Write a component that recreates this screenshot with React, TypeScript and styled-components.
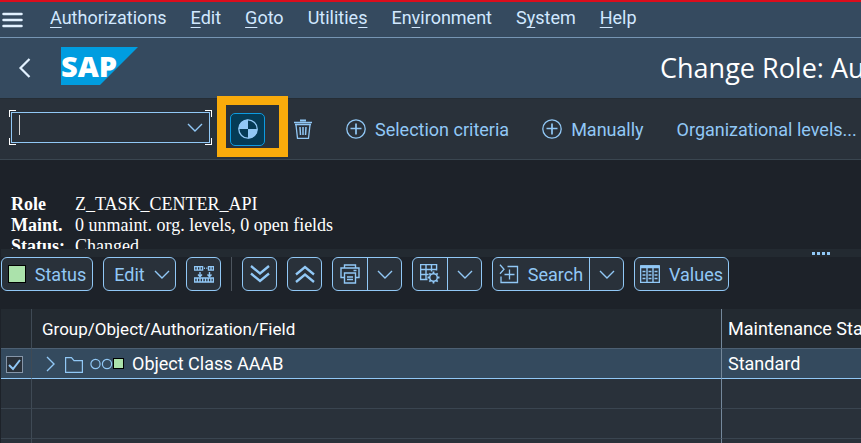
import React from "react";
import styled, { createGlobalStyle, css } from "styled-components";

const link = "#91c8f6";
const sans = `Roboto, "Liberation Sans", sans-serif`;

const GlobalStyle = createGlobalStyle`
  *, *::before, *::after { box-sizing: border-box; }
  html, body { margin: 0; background: #1d2229; }
  body { font-family: ${sans}; font-size: 18px; color: #fff; }
  button, input { font: inherit; color: inherit; }
`;

const Page = styled.div`
  height: 100vh;
  overflow: hidden;
  background: #1d2229;
`;

const MenuBar = styled.nav`
  display: flex;
  align-items: center;
  height: 38px;
  padding: 0 2px;
  border-top: 2px solid #dc0d1c;
  border-bottom: 1px solid #7695b3;
  background: #354a5f;
  color: #d1e8ff;
`;

const PlainButton = styled.button`
  display: flex;
  align-items: center;
  flex: none;
  gap: 9px;
  padding: 0;
  border: 0;
  background: none;
  white-space: nowrap;
`;

const MenuList = styled.ul`
  display: flex;
  gap: 24px;
  margin: 0 0 4px 27px;
  padding: 0;
  list-style: none;
`;

const Key = styled.u`
  text-decoration: underline;
  text-decoration-thickness: 1px;
  text-underline-offset: 3px;
  text-decoration-skip-ink: none;
`;

const Header = styled.header`
  display: flex;
  align-items: center;
  height: 60px;
  padding-left: 17px;
  background: #354a5f;
  overflow: hidden;
`;

const Logo = styled.svg`
  flex: none;
  margin: 0 0 4px 28px;
`;

const Title = styled.h1`
  flex: none;
  margin: 0 0 0 522px;
  font-family: "Open Sans", sans-serif;
  font-size: 27px;
  line-height: 32px;
  font-weight: 400;
  white-space: nowrap;
`;

const ActionBar = styled.div`
  display: flex;
  align-items: center;
  height: 62px;
  padding-left: 9px;
  border-top: 1px solid #252d35;
  border-bottom: 1px solid #3a4650;
  background: #29313a;
  color: ${link};
`;

const corner = (x: string, y: string) => css`
  linear-gradient(#fff, #fff) ${x} ${y} / 7px 1px no-repeat,
  linear-gradient(#fff, #fff) ${x} ${y} / 1px 7px no-repeat
`;

const CommandFrame = styled.div`
  flex: none;
  width: 203px;
  padding: 2px;
  margin-bottom: 4px;
  background: ${corner("left", "top")}, ${corner("right", "top")},
    ${corner("left", "bottom")}, ${corner("right", "bottom")};
`;

const CommandBox = styled.div`
  display: flex;
  align-items: center;
  height: 31px;
  padding: 0 6px 0 7px;
  border: 1px solid ${link};
`;

const Caret = styled.span`
  width: 1px;
  height: 20px;
  margin-bottom: 5px;
  background: #d5d5d5;
`;

const CommandInput = styled.input`
  flex: 1;
  min-width: 0;
  height: 27px;
  padding: 0;
  border: 0;
  outline: 0;
  background: none;
`;

const Highlight = styled.div`
  position: relative;
  flex: none;
  margin: 0 28px 0 18px;

  &::after {
    content: "";
    position: absolute;
    inset: -17px -23px -11px -13px;
    border: 9px solid #f9ab0b;
    pointer-events: none;
  }
`;

const ActiveButton = styled(PlainButton)`
  justify-content: center;
  width: 35px;
  height: 33px;
  border: 1px solid #0d9be0;
  border-radius: 5px;
  background: #053b56;
`;

const Actions = styled.div`
  display: flex;
  gap: 33px;
`;

const RoleInfo = styled.dl`
  display: grid;
  grid-template-columns: 64px 1fr;
  align-content: start;
  height: 89px;
  margin: 0;
  padding: 34px 11px 0;
  overflow: hidden;
  font-family: "Liberation Serif", serif;
  font-size: 18px;
  line-height: 21px;
`;

const Term = styled.dt`
  font-weight: 700;
`;

const Detail = styled.dd`
  margin: 0;
`;

const Splitter = styled.div`
  display: flex;
  justify-content: flex-end;
  align-items: center;
  gap: 2px;
  height: 8px;
  margin-left: 1px;
  padding-right: 31px;
  background: #232a31;
`;

const Dot = styled.i`
  width: 3px;
  height: 3px;
  background: ${link};
`;

const GridBar = styled.div`
  display: flex;
  gap: 10px;
  padding: 0 1px;
  color: ${link};
`;

const Group = styled.div`
  display: flex;
  flex: none;
  height: 34px;
  border: 1px solid ${link};
  border-radius: 6px;
  background: #29313a;
  overflow: hidden;
`;

const GroupButton = styled(PlainButton)<{ $w?: number; $menu?: boolean }>`
  justify-content: center;
  width: ${(p) => (p.$w ? `${p.$w}px` : "auto")};
  padding-left: ${(p) => (p.$menu ? "5px" : "0")};

  & + & {
    border-left: 1px solid ${link};
  }
`;

const Separator = styled.span`
  width: 1px;
  height: 34px;
  background: #4d555e;
`;

const Led = styled.i<{ $size: number }>`
  flex: none;
  width: ${(p) => p.$size}px;
  height: ${(p) => p.$size}px;
  border: 1px solid #000;
  background: #abe2ab;
`;

const Tree = styled.table`
  width: calc(100% - 1px);
  margin: 18px 0 0 1px;
  border-collapse: separate;
  border-spacing: 0;
  table-layout: fixed;
  text-align: left;
`;

const CheckCol = styled.col`
  width: 31px;
`;

const NameCol = styled.col`
  width: 690px;
`;

const Row = styled.tr<{ $selected?: boolean }>`
  height: 30px;
  background: ${(p) => (p.$selected ? "#344a5e" : "#29313a")};

  & > td {
    border-bottom: 1px solid ${(p) => (p.$selected ? link : "#3a4550")};
  }
`;

const HeadRow = styled.tr`
  height: 40px;
  background: #232a31;

  & > th {
    border-bottom: 1px solid #4d6073;
    font-weight: 400;
  }
`;

const cell = css`
  padding: 0;
  white-space: nowrap;
  overflow: hidden;

  &:first-child { border-right: 1px solid #3f4a55; }
  &:nth-child(2) { padding-left: 10px; border-right: 1px solid #74889b; }
  &:nth-child(3) { padding-left: 6px; }
`;

const HeadCell = styled.th<{ $compact?: boolean }>`
  ${cell}
  font-size: ${(p) => (p.$compact ? 17 : 18)}px;
`;

const Cell = styled.td`
  ${cell}
`;

const CheckBox = styled.input`
  display: block;
  appearance: none;
  width: 17px;
  height: 17px;
  margin: 1px 0 0 5px;
  border: 1px solid #8696a9;
  background: #29313a;

  &:checked {
    background: #29313a
      url("data:image/svg+xml,%3Csvg xmlns='http://www.w3.org/2000/svg' viewBox='0 0 15 15' fill='none' stroke='%2391c8f6' stroke-width='2'%3E%3Cpath d='M2 8l4 4 7-9'/%3E%3C/svg%3E")
      center / 15px 15px no-repeat;
  }
`;

const Node = styled.div`
  display: flex;
  align-items: center;
`;

const FolderIcon = styled.svg`
  margin: 2px 7px 0 7px;
`;

const Lamps = styled.span`
  display: flex;
  align-items: center;
  margin-right: 8px;
`;

const Chevron = ({ w = 16, h = 9 }: { w?: number; h?: number }) => (
  <svg width={w} height={h} viewBox="0 0 16 9" fill="none" stroke={link} strokeWidth="1.4" aria-hidden="true">
    <path d="M1 1l7 7 7-7" />
  </svg>
);

const PlusCircle = () => (
  <svg width="20" height="20" viewBox="0 0 20 20" fill="none" stroke={link} strokeWidth="1.3" aria-hidden="true">
    <circle cx="10" cy="10" r="9.2" />
    <path d="M4.500 9.500h11M10 4.500v11" strokeWidth="1.7" />
  </svg>
);

const menus = [
  ["", "A", "uthorizations"],
  ["", "E", "dit"],
  ["", "G", "oto"],
  ["Utilitie", "s", ""],
  ["En", "v", "ironment"],
  ["S", "y", "stem"],
  ["", "H", "elp"],
];

export default function App() {
  return (
    <Page>
      <GlobalStyle />
      <MenuBar aria-label="Main menu">
        <PlainButton aria-label="Menu">
          <svg width="21" height="16" viewBox="0 0 21 16" stroke="#e2f1ff" strokeWidth="2.500" strokeLinecap="round">
            <path d="M1.500 2h18M1.500 8h18M1.500 14h18" />
          </svg>
        </PlainButton>
        <MenuList>
          {menus.map(([a, key, b]) => (
            <li key={a + key + b}>
              <PlainButton>
                <span>{a}<Key>{key}</Key>{b}</span>
              </PlainButton>
            </li>
          ))}
        </MenuList>
      </MenuBar>

      <Header>
        <PlainButton aria-label="Back">
          <svg width="16" height="20" viewBox="0 0 16 20" fill="none" stroke="#e2f1ff" strokeWidth="2.200">
            <path d="M12.500 1L3.500 10l9 9" />
          </svg>
        </PlainButton>
        <Logo width="77" height="38" viewBox="0 0 77 38" role="img" aria-label="SAP">
          <path d="M0 0h77L39 38H0z" fill="#009de0" />
          <text x="0" y="30" fill="#fff" fontFamily="Open Sans" fontWeight="800" fontSize="29">SAP</text>
        </Logo>
        <Title>Change Role: Authorizations</Title>
      </Header>

      <ActionBar>
        <CommandFrame>
          <CommandBox>
            <Caret />
            <CommandInput aria-label="Command" />
            <PlainButton aria-label="Open command list"><Chevron /></PlainButton>
          </CommandBox>
        </CommandFrame>
        <Highlight>
          <ActiveButton aria-label="Status">
            <svg width="20" height="20" viewBox="0 0 20 20" aria-hidden="true">
              <circle cx="10" cy="10" r="9.200" fill="none" stroke={link} strokeWidth="1.300" />
              <path d="M10 10V.5A9.500 9.500 0 0 0 .5 10zM10 10v9.500a9.500 9.500 0 0 0 9.500-9.500z" fill={link} />
            </svg>
          </ActiveButton>
        </Highlight>
        <Actions>
          <PlainButton aria-label="Delete">
            <svg width="20" height="22" viewBox="0 0 20 22" fill="none" stroke={link} strokeWidth="1.300" aria-hidden="true">
              <path d="M7 2.500h6" strokeWidth="2" />
              <path d="M1 4.500h18M2 6.500h16M3 7l1.500 13.300h11L17 7" />
              <path d="M7 9l.5 8M10 9v8M13 9l-.5 8" strokeWidth="1.500" />
            </svg>
          </PlainButton>
          <PlainButton><PlusCircle />Selection criteria</PlainButton>
          <PlainButton><PlusCircle />Manually</PlainButton>
          <PlainButton>Organizational levels...</PlainButton>
        </Actions>
      </ActionBar>

      <RoleInfo>
        <Term>Role</Term><Detail>Z_TASK_CENTER_API</Detail>
        <Term>Maint.</Term><Detail>0 unmaint. org. levels, 0 open fields</Detail>
        <Term>Status:</Term><Detail>Changed</Detail>
      </RoleInfo>

      <Splitter><Dot /><Dot /><Dot /><Dot /></Splitter>

      <GridBar role="toolbar">
        <Group><GroupButton $w={90}><Led $size={18} />Status</GroupButton></Group>
        <Group><GroupButton $w={71} $menu>Edit<Chevron /></GroupButton></Group>
        <Group>
          <GroupButton $w={33} aria-label="Compare entries">
            <svg width="20" height="18" viewBox="0 0 20 18" fill="none" stroke={link} strokeWidth="1.400" aria-hidden="true">
              <path d="M.6 1.600h8v3.500h-8zM3.300 1.600v3.500M6 1.600v3.500M14.500 1.600h5v3.500h-5zM17 1.600v3.500M10 3.300h1M12.300 3.300h1" />
              <path d="M.6 13h18.800v4H.6zM3.300 13v4M6 13v4M8.700 13v4M11.500 13v4M14.200 13v4M16.900 13v4" />
              <path d="M6 7v5M4 9.500l2 2.300 2-2.300M15.500 7v5M13.500 9.500l2 2.300 2-2.300" />
            </svg>
          </GroupButton>
        </Group>
        <Separator />
        <Group>
          <GroupButton $w={33} aria-label="Expand all">
            <svg width="20" height="18" viewBox="0 0 20 18" fill="none" stroke={link} strokeWidth="2.300" aria-hidden="true">
              <path d="M1 1l9 7.500L19 1M1 8.500l9 7.500 9-7.500" />
            </svg>
          </GroupButton>
        </Group>
        <Group>
          <GroupButton $w={33} aria-label="Collapse all">
            <svg width="20" height="18" viewBox="0 0 20 18" fill="none" stroke={link} strokeWidth="2.300" aria-hidden="true">
              <path d="M1 9.500L10 2l9 7.500M1 17l9-7.500 9 7.500" />
            </svg>
          </GroupButton>
        </Group>
        <Group>
          <GroupButton $w={34} aria-label="Print">
            <svg width="20" height="20" viewBox="0 0 20 20" fill="none" stroke={link} strokeWidth="1.400" aria-hidden="true">
              <path d="M4.500 4V1h11v3M4.500 13.500H1V4h18v9.500h-3.500M4.500 9h11v10h-11zM7 13h6M7 15.500h6M13.500 6.500h3" />
            </svg>
          </GroupButton>
          <GroupButton $w={34} aria-label="Print options"><Chevron /></GroupButton>
        </Group>
        <Group>
          <GroupButton $w={34} aria-label="Layout">
            <svg width="20" height="20" viewBox="0 0 20 20" fill="none" stroke={link} strokeWidth="1.400" aria-hidden="true">
              <path d="M7.500 15.500H.6V.6h16v6M.6 5.500h15.500M.6 10.500h8M6 .6v14.900M11.500.6v7" />
              <circle cx="13.500" cy="13.500" r="3.800" strokeWidth="1.500" />
              <path d="M13.500 7.500v2M13.500 17.500v2M7.500 13.500h2M17.500 13.500h2M9.300 9.300l1.400 1.400M16.300 16.300l1.400 1.400M9.300 17.700l1.400-1.400M16.300 10.700l1.400-1.400" strokeWidth="1.800" />
            </svg>
          </GroupButton>
          <GroupButton $w={34} aria-label="Layout options"><Chevron /></GroupButton>
        </Group>
        <Group>
          <GroupButton $w={96}>
            <svg width="20" height="20" viewBox="0 0 20 20" fill="none" stroke={link} strokeWidth="1.300" aria-hidden="true">
              <path d="M1 .8l4 4.500-4 4.500M8.500 2.500h10v16H2v-6M10.500 5.500v10M5.500 10.500h10" />
            </svg>
            Search
          </GroupButton>
          <GroupButton $w={34} aria-label="Search options"><Chevron /></GroupButton>
        </Group>
        <Group>
          <GroupButton $w={93}>
            <svg width="20" height="18" viewBox="0 0 20 18" fill="none" stroke={link} strokeWidth="1.400" aria-hidden="true">
              <path d="M.6 1h18.800v16.400H.6zM7 1v16.400M13 1v16.400" />
              <path d="M.6 1.800h18.800" strokeWidth="3" />
              <path d="M2.500 6.500h3M2.500 10h3M2.500 13.500h3M8.500 6.500h3M8.500 10h3M8.500 13.500h3M14.500 6.500h3M14.500 10h3M14.500 13.500h3" />
            </svg>
            Values
          </GroupButton>
        </Group>
      </GridBar>

      <Tree>
        <colgroup><CheckCol /><NameCol /><col /></colgroup>
        <thead>
          <HeadRow>
            <HeadCell aria-label="Selected" />
            <HeadCell $compact>Group/Object/Authorization/Field</HeadCell>
            <HeadCell>Maintenance Status</HeadCell>
          </HeadRow>
        </thead>
        <tbody>
          <Row $selected>
            <Cell><CheckBox type="checkbox" defaultChecked aria-label="Select Object Class AAAB" /></Cell>
            <Cell>
              <Node>
                <PlainButton aria-label="Expand">
                  <svg width="16" height="16" viewBox="0 0 16 16" fill="none" stroke={link} strokeWidth="1.400">
                    <path d="M5 1l7 7-7 7" />
                  </svg>
                </PlainButton>
                <FolderIcon width="18" height="16" viewBox="0 0 18 16" fill="none" stroke={link} strokeWidth="1.200" aria-hidden="true">
                  <path d="M.6 15.400V.6h5.900l2.500 3h8.400v11.800z" />
                </FolderIcon>
                <Lamps>
                  <svg width="23" height="12" viewBox="0 0 23 12" fill="none" stroke={link} strokeWidth="1.200" aria-hidden="true">
                    <circle cx="5.500" cy="6" r="4.600" />
                    <circle cx="17" cy="6" r="4.600" />
                  </svg>
                  <Led $size={11} />
                </Lamps>
                Object Class AAAB
              </Node>
            </Cell>
            <Cell>Standard</Cell>
          </Row>
          {[0, 1, 2].map((n) => (
            <Row key={n}><Cell /><Cell /><Cell /></Row>
          ))}
        </tbody>
      </Tree>
    </Page>
  );
}
